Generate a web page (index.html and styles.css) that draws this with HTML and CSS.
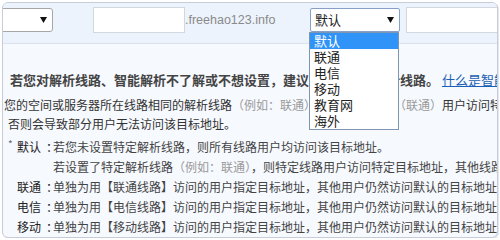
FILE: index.html
```html
<!DOCTYPE html>
<html lang="zh-CN">
<head>
<meta charset="utf-8">
<title>解析线路</title>
<link rel="stylesheet" href="styles.css">
</head>
<body>
<div class="panel">
  <div class="toolbar">
    <div class="select select-left">
      <span class="select-text"></span>
      <svg class="arrow" width="7" height="6" viewBox="0 0 7 6"><polygon points="0,0 7,0 3.5,6" fill="#111"/></svg>
    </div>
    <div class="input input-host"></div>
    <span class="suffix">.freehao123.info</span>
    <div class="select select-line">
      <span class="select-text">默认</span>
      <svg class="arrow" width="7" height="6" viewBox="0 0 7 6"><polygon points="0,0 7,0 3.5,6" fill="#111"/></svg>
    </div>
    <div class="input input-value"></div>
  </div>

  <div class="content">
    <p class="lead">若您对解析线路、智能解析不了解或不想设置，建议选择默认的解析线路。 <a class="help" href="#">什么是智能解析？</a></p>
    <p class="para para-first">与您的空间或服务器所在线路相同的解析线路<span class="muted">（例如：联通）</span>，选择对应线路<span class="muted">（联通）</span>用户访问特定目标地址，</p>
    <p class="para para-second">否则会导致部分用户无法访问该目标地址。</p>

    <div class="rows">
      <div class="row">
        <span class="mark">*</span>
        <span class="label">默认<span class="colon">：</span></span>
        <div class="desc">
          <div>若您未设置特定解析线路，则所有线路用户均访问该目标地址。</div>
          <div>若设置了特定解析线路<span class="muted">（例如：联通）</span>，则特定线路用户访问特定目标地址，其他线路用户访问默认目标地址。</div>
        </div>
      </div>
      <div class="row">
        <span class="mark"></span>
        <span class="label">联通<span class="colon">：</span></span>
        <div class="desc">单独为用【联通线路】访问的用户指定目标地址，其他用户仍然访问默认的目标地址。</div>
      </div>
      <div class="row">
        <span class="mark"></span>
        <span class="label">电信<span class="colon">：</span></span>
        <div class="desc">单独为用【电信线路】访问的用户指定目标地址，其他用户仍然访问默认的目标地址。</div>
      </div>
      <div class="row">
        <span class="mark"></span>
        <span class="label">移动<span class="colon">：</span></span>
        <div class="desc">单独为用【移动线路】访问的用户指定目标地址，其他用户仍然访问默认的目标地址。</div>
      </div>
    </div>
  </div>

  <ul class="dropdown">
    <li class="option selected">默认</li>
    <li class="option">联通</li>
    <li class="option">电信</li>
    <li class="option">移动</li>
    <li class="option">教育网</li>
    <li class="option">海外</li>
  </ul>
</div>
</body>
</html>
```

FILE: styles.css
```css
html, body {
  margin: 0;
  padding: 0;
  background: #ffffff;
}

body {
  font-family: "Noto Sans CJK SC", "Liberation Sans", sans-serif;
  font-size: 12px;
  color: #333;
}

.panel {
  position: relative;
  margin: 2px 2px 0 2px;
  height: 234px;
  border: 1px solid #c6ccd8;
  border-radius: 6px;
  overflow: hidden;
  background: #f6f9fe;
  box-shadow: 1px 1px 0 #e3e7ee;
}

.toolbar {
  display: flex;
  align-items: flex-start;
  height: 36px;
  padding-top: 4px;
  background: #edf3fc;
  border-bottom: 1px solid #dbe2ed;
}

.toolbar > * {
  flex: none;
}

.select {
  position: relative;
  box-sizing: border-box;
  height: 24px;
  margin-top: 1px;
  background: #fff;
  display: flex;
  align-items: center;
  justify-content: space-between;
  padding: 0 5px 0 4px;
}

.select-left {
  width: 61px;
  margin-left: -11px;
  border: 1px solid #a6a6a6;
  border-radius: 3px;
}

.select-line {
  width: 90px;
  border: 1px solid #86a0c6;
  border-radius: 2px;
  font-size: 13px;
  color: #222;
}

.select-text {
  line-height: 20px;
}

.arrow {
  display: block;
}

.input {
  box-sizing: border-box;
  height: 26px;
  background: #fff;
  border: 1px solid #d3d7de;
}

.input-host {
  width: 92px;
  margin-left: 40px;
}

.suffix {
  width: 125px;
  font-family: "Liberation Sans", Arial, sans-serif;
  font-size: 12.5px;
  line-height: 26px;
  color: #8a8a8a;
}

.input-value {
  width: 120px;
  margin-left: 6px;
}

.content {
  padding-top: 26px;
}

.content p {
  margin: 0;
  white-space: nowrap;
}

.lead {
  padding-left: 7px;
  font-size: 13px;
  line-height: 20px;
  font-weight: bold;
  color: #444;
}

.help {
  font-weight: normal;
  color: #1a5fb4;
  text-decoration: underline;
}

.para {
  line-height: 19px;
  color: #333;
}

.content .para-first {
  margin-top: 5px;
  margin-left: -11px;
}

.para-second {
  padding-left: 5px;
}

.muted {
  color: #9a9a9a;
}

.rows {
  margin-top: 4px;
  padding-left: 5px;
}

.row {
  display: flex;
  line-height: 20px;
  white-space: nowrap;
}

.mark {
  width: 9px;
  flex: none;
  font-size: 10px;
  line-height: 14px;
  color: #667;
}

.label {
  flex: none;
  color: #222;
}

.colon {
  padding-left: 5px;
  margin-right: -5px;
}

.desc {
  color: #444;
}

.dropdown {
  position: absolute;
  left: 306px;
  top: 29px;
  width: 90px;
  margin: 0;
  padding: 0;
  list-style: none;
  background: #fff;
  border: 1px solid #7f96b2;
  box-sizing: border-box;
}

.option {
  height: 16px;
  line-height: 16px;
  padding-left: 4px;
  font-size: 13px;
  color: #222;
}

.option.selected {
  background: #3093f7;
  color: #fff;
}
```
